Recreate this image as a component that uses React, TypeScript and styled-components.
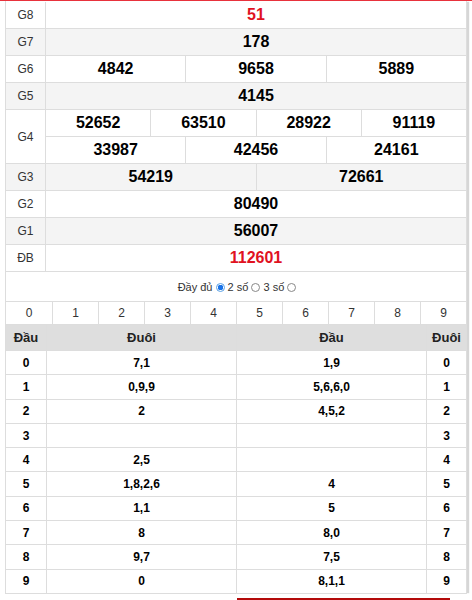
import React from "react";
import styled, { createGlobalStyle } from "styled-components";

const Global = createGlobalStyle`
  html, body { margin: 0; padding: 0; background: #fff; }
  body { font-family: "Liberation Sans", Arial, sans-serif; color: #000; }
  * { box-sizing: border-box; }
`;

const Page = styled.div`
  width: 472px;
  height: 600px;
  overflow: hidden;
  border-top: 1px solid #e8323c;
`;

const Panel = styled.div`
  margin: 0 5px 0 5px;
  padding-top: 1px;
  width: 462px;
  border-left: 1px solid #ddd;
  border-right: 1px solid #ddd;
  box-shadow: 3px 0 1px -1px #d6d6d6;
`;

const PrizeRow = styled.div<{ $alt?: boolean; $h?: number }>`
  display: flex;
  height: ${(p) => p.$h ?? 27}px;
  border-bottom: 1px solid #ddd;
  background: ${(p) => (p.$alt ? "#f4f4f4" : "#fff")};
`;

const Label = styled.div`
  width: 40px;
  flex: none;
  display: flex;
  align-items: center;
  justify-content: center;
  font-size: 12px;
  color: #333;
  border-right: 1px solid #ddd;
`;

const Values = styled.div`
  flex: 1;
  display: flex;
  flex-direction: column;
`;

const Line = styled.div<{ $split?: boolean }>`
  flex: 1;
  display: flex;
  border-bottom: ${(p) => (p.$split ? "1px solid #ddd" : "none")};
`;

const Num = styled.div<{ $red?: boolean }>`
  flex: 1;
  display: flex;
  align-items: center;
  justify-content: center;
  font-size: 16px;
  font-weight: bold;
  color: ${(p) => (p.$red ? "#e0121f" : "#000")};
  & + & { border-left: 1px solid #ddd; }
`;

const RadioRow = styled.div`
  height: 30px;
  display: flex;
  align-items: center;
  justify-content: center;
  font-size: 11px;
  color: #333;
  border-bottom: 1px solid #ddd;
  white-space: pre;
  padding-top: 1px;
  padding-left: 2px;
`;

const Radio = styled.span<{ $on?: boolean }>`
  display: inline-block;
  width: 9px;
  height: 9px;
  border-radius: 50%;
  margin: 1px 0 0 0;
  border: 1px solid ${(p) => (p.$on ? "#5aa1e6" : "#888")};
  background: ${(p) => (p.$on ? "radial-gradient(circle, #1a73e8 0 2.6px, #fff 3px)" : "#fff")};
`;

const DigitRow = styled.div`
  display: grid;
  grid-template-columns: repeat(10, 1fr);
  height: 23px;
  border-bottom: 1px solid #ddd;
`;

const Digit = styled.div`
  display: flex;
  align-items: center;
  justify-content: center;
  font-size: 12px;
  color: #333;
  & + & { border-left: 1px solid #ddd; }
`;

const LotoRow = styled.div<{ $head?: boolean }>`
  display: grid;
  grid-template-columns: 40px 1fr 1fr 40px;
  height: ${(p) => (p.$head ? 26 : 24.3)}px;
  border-bottom: 1px solid #ddd;
  background: ${(p) => (p.$head ? "#dedede" : "#fff")};
`;

const LotoCell = styled.div<{ $head?: boolean }>`
  display: flex;
  align-items: center;
  justify-content: center;
  font-size: ${(p) => (p.$head ? 13 : 12)}px;
  font-weight: bold;
  color: ${(p) => (p.$head ? "#222" : "#000")};
  & + & { border-left: 1px solid #ddd; }
`;

const Footer = styled.div`
  display: flex;
  padding-left: 237px;
  margin-top: 4px;
`;

const RedBar = styled.div`
  width: 213px;
  height: 6px;
  background: #b30a0a;
`;

type Prize = { label: string; lines: string[][]; red?: boolean };

const prizes: Prize[] = [
  { label: "G8", lines: [["51"]], red: true },
  { label: "G7", lines: [["178"]] },
  { label: "G6", lines: [["4842", "9658", "5889"]] },
  { label: "G5", lines: [["4145"]] },
  { label: "G4", lines: [["52652", "63510", "28922", "91119"], ["33987", "42456", "24161"]] },
  { label: "G3", lines: [["54219", "72661"]] },
  { label: "G2", lines: [["80490"]] },
  { label: "G1", lines: [["56007"]] },
  { label: "ĐB", lines: [["112601"]], red: true },
];

const dau = ["7,1", "0,9,9", "2", "", "2,5", "1,8,2,6", "1,1", "8", "9,7", "0"];
const duoi = ["1,9", "5,6,6,0", "4,5,2", "", "", "4", "5", "8,0", "7,5", "8,1,1"];

export default function App() {
  return (
    <Page>
      <Global />
      <Panel>
        {prizes.map((p, i) => (
          <PrizeRow key={p.label} $alt={i % 2 === 1} $h={27 * p.lines.length}>
            <Label>{p.label}</Label>
            <Values>
              {p.lines.map((line, j) => (
                <Line key={j} $split={j < p.lines.length - 1}>
                  {line.map((n) => (
                    <Num key={n} $red={p.red}>
                      {n}
                    </Num>
                  ))}
                </Line>
              ))}
            </Values>
          </PrizeRow>
        ))}
        <RadioRow>
          {"Đầy đủ "}<Radio $on />{" 2 số "}<Radio />{" 3 số "}<Radio />
        </RadioRow>
        <DigitRow>
          {Array.from({ length: 10 }, (_, i) => (
            <Digit key={i}>{i}</Digit>
          ))}
        </DigitRow>
        <LotoRow $head>
          <LotoCell $head>Đầu</LotoCell>
          <LotoCell $head>Đuôi</LotoCell>
          <LotoCell $head>Đầu</LotoCell>
          <LotoCell $head>Đuôi</LotoCell>
        </LotoRow>
        {dau.map((d, i) => (
          <LotoRow key={i}>
            <LotoCell>{i}</LotoCell>
            <LotoCell>{d}</LotoCell>
            <LotoCell>{duoi[i]}</LotoCell>
            <LotoCell>{i}</LotoCell>
          </LotoRow>
        ))}
      </Panel>
      <Footer>
        <RedBar />
      </Footer>
    </Page>
  );
}
